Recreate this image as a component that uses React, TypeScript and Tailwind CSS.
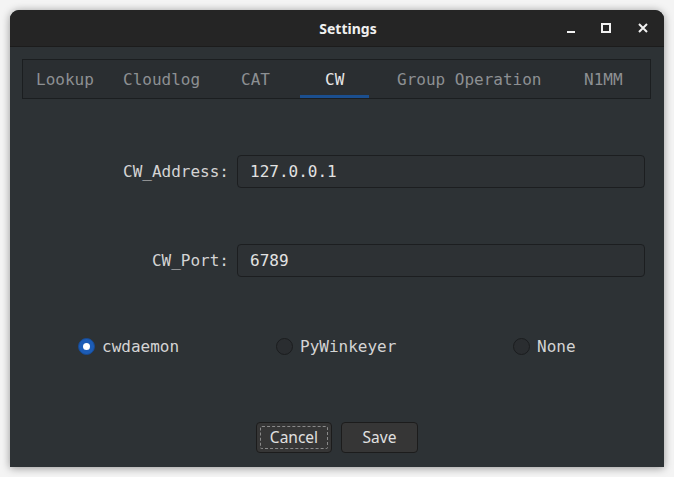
import React from "react";

const mono = { fontFamily: '"DejaVu Sans Mono", "Liberation Mono", monospace' };
const sans = { fontFamily: '"Noto Sans", "Open Sans", sans-serif' };

function Radio({ checked, label, className }: { checked?: boolean; label: string; className?: string }) {
  return (
    <div className={"flex items-center " + (className ?? "")}>
      {checked ? (
        <span className="flex h-[17px] w-[17px] items-center justify-center rounded-full border border-[#174a92] bg-[#1c5cb6]">
          <span className="h-[7px] w-[7px] rounded-full bg-white" />
        </span>
      ) : (
        <span className="h-[17px] w-[17px] rounded-full border border-[#1b1d1f] bg-[#2a2d30]" />
      )}
      <span className="ml-[7px] text-[16px] text-[#d4d4d4]" style={mono}>
        {label}
      </span>
    </div>
  );
}

const tabs = [
  { label: "Lookup", w: 85, pl: 13 },
  { label: "Cloudlog", w: 112, pl: 15 },
  { label: "CAT", w: 80, pl: 21 },
  { label: "CW", w: 69, pl: 25, active: true },
  { label: "Group Operation", w: 193, pl: 28 },
  { label: "N1MM", w: 88, pl: 22 },
];

export default function App() {
  return (
    <div className="h-[477px] w-[674px] bg-[#f4f4f4] p-[10px]">
      <div className="flex h-[457px] w-[654px] flex-col overflow-hidden rounded-t-[9px] bg-[#2d3235] shadow-[0_1px_9px_rgba(0,0,0,0.4)]">
        {/* title bar */}
        <div className="relative flex h-[37px] shrink-0 items-center justify-center border-b border-[#1c1c1c] bg-[#252525] pl-[22px]">
          <span className="text-[14px] font-bold text-[#f0f0f0]" style={sans}>
            Settings
          </span>
          <div className="absolute right-0 top-0 h-full">
            <svg width="12" height="12" viewBox="0 0 12 12" className="absolute left-[-99px] top-[13px]">
              <rect x="2" y="8" width="8" height="2" fill="#f2f2f2" />
            </svg>
            <svg width="12" height="12" viewBox="0 0 12 12" className="absolute left-[-64px] top-[13px]">
              <rect x="2" y="1" width="8" height="8" fill="none" stroke="#f2f2f2" strokeWidth="2" />
            </svg>
            <svg width="12" height="12" viewBox="0 0 12 12" className="absolute left-[-27px] top-[13px]">
              <path d="M2 1 L10 9 M10 1 L2 9" stroke="#f2f2f2" strokeWidth="2" />
            </svg>
          </div>
        </div>

        {/* body */}
        <div className="flex flex-1 flex-col px-[12px] pt-[12px]">
          <div className="flex h-[40px] w-[629px] border border-[#1b1e20] bg-[#2a2e31]">
            {tabs.map((t) => (
              <div
                key={t.label}
                className="relative flex h-full items-center whitespace-nowrap pt-[1px]"
                style={{ width: t.w, paddingLeft: t.pl }}
              >
                <span
                  className={"text-[16px] " + (t.active ? "text-[#e6e6e6]" : "text-[#8d9093]")}
                  style={mono}
                >
                  {t.label}
                </span>
                {t.active && <span className="absolute bottom-0 left-0 h-[3px] w-full bg-[#1b4f8f]" />}
              </div>
            ))}
          </div>

          {/* form */}
          <div className="mt-[56px] flex items-center">
            <div className="w-[207px] text-right text-[16px] text-[#d4d4d4]" style={mono}>
              CW_Address:
            </div>
            <div className="ml-[8px] flex h-[33px] w-[408px] items-center rounded-[4px] border border-[#1c1e20] bg-[#2d3134] pl-[12px] text-[16px] text-[#e2e2e2]" style={mono}>
              127.0.0.1
            </div>
          </div>

          <div className="mt-[56px] flex items-center">
            <div className="w-[207px] text-right text-[16px] text-[#d4d4d4]" style={mono}>
              CW_Port:
            </div>
            <div className="ml-[8px] flex h-[33px] w-[408px] items-center rounded-[4px] border border-[#1c1e20] bg-[#2d3134] pl-[12px] text-[16px] text-[#e2e2e2]" style={mono}>
              6789
            </div>
          </div>

          <div className="mt-[61px] flex h-[17px] items-center pl-[56px]">
            <Radio checked label="cwdaemon" className="w-[198px]" />
            <Radio label="PyWinkeyer" className="w-[237px]" />
            <Radio label="None" />
          </div>

          <div className="mt-[67px] flex justify-center gap-[9px]" style={sans}>
            <button className="relative h-[31px] w-[76px] rounded-[4px] border border-[#1c1c1c] bg-[#363636] text-[15.5px] text-[#e0e0e0]">
              <span className="absolute inset-[3px] rounded-[2px] border border-dashed border-[#8a8a8a]" />
              Cancel
            </button>
            <button className="h-[31px] w-[77px] rounded-[4px] border border-[#1c1c1c] bg-[#363636] text-[15.5px] text-[#e0e0e0]">
              Save
            </button>
          </div>
        </div>
      </div>
    </div>
  );
}
